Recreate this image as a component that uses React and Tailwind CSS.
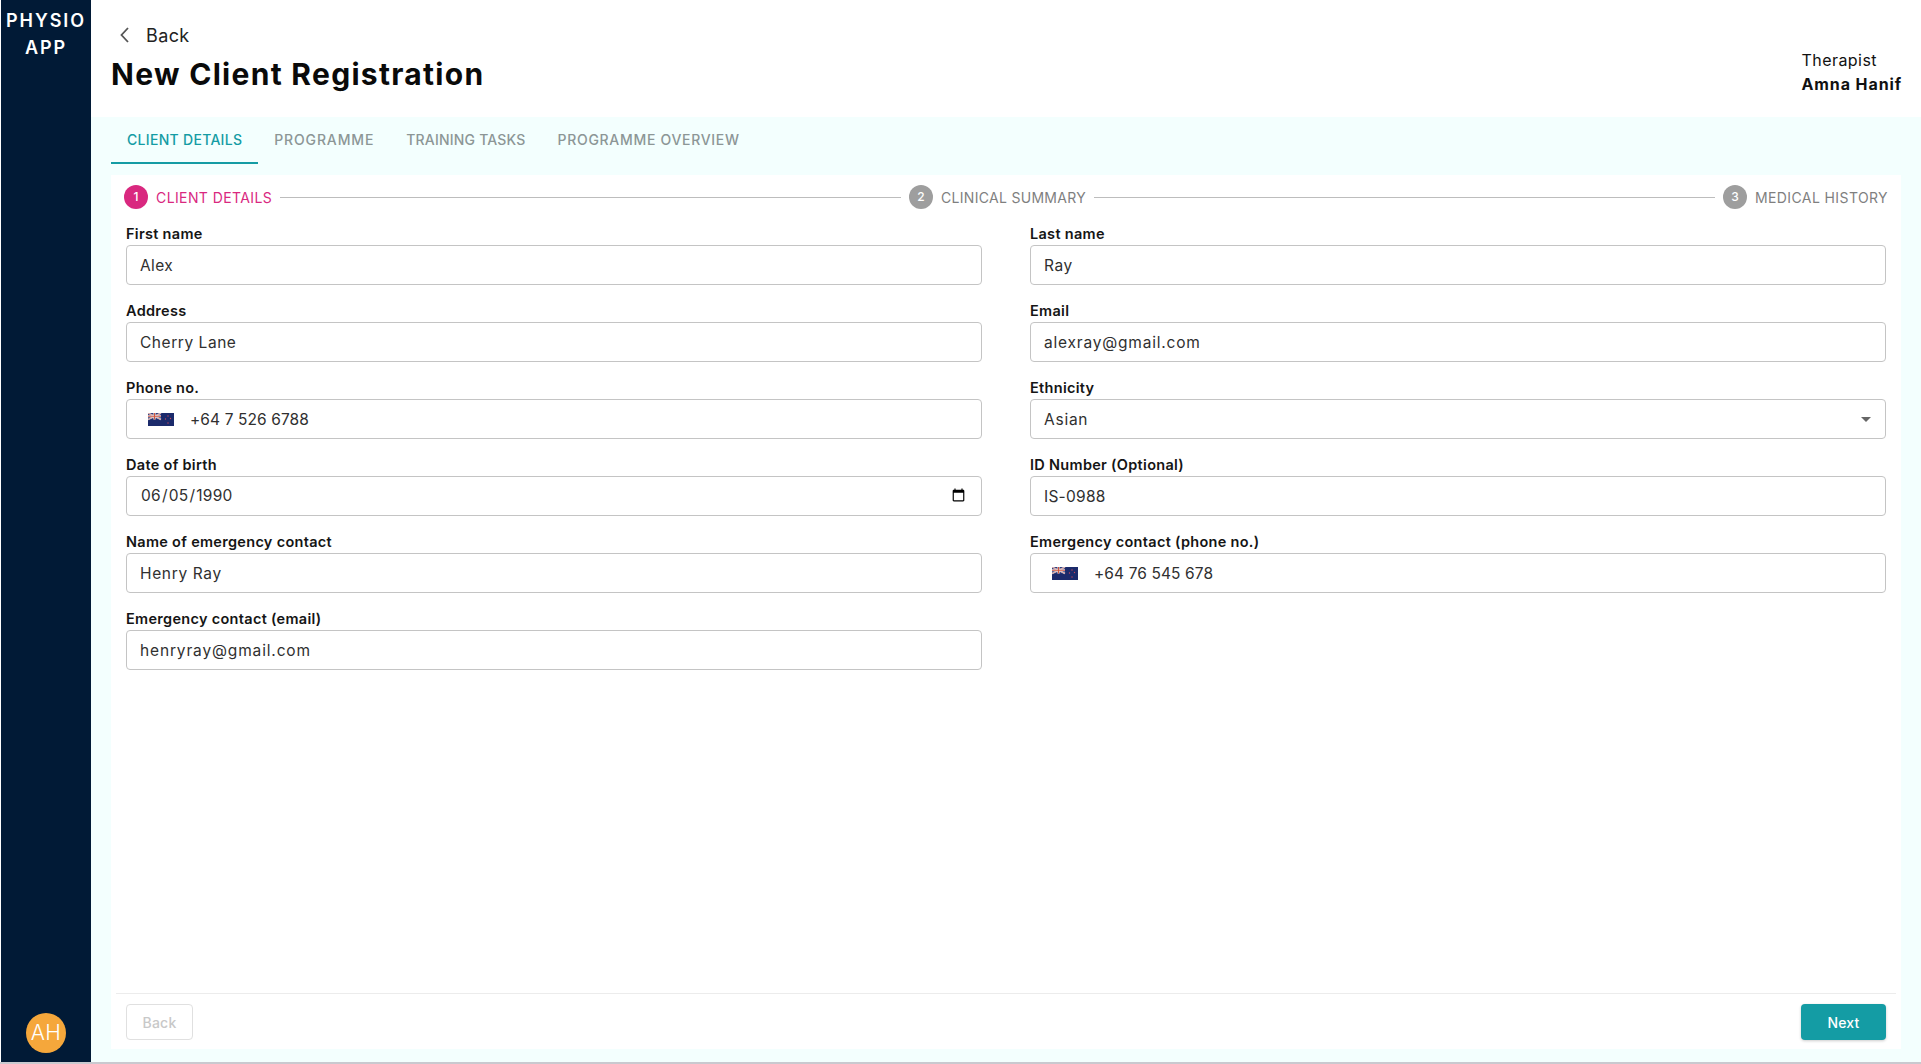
import React from "react";

const font = { fontFamily: "Inter, 'Noto Sans', sans-serif" };

function Flag() {
  return (
    <svg width="26" height="13" viewBox="0 0 26 13" className="shrink-0">
      <rect width="26" height="13" fill="#1b2a6b" />
      <rect width="13" height="6.5" fill="#2a3a7c" />
      <path d="M0 0L13 6.5M13 0L0 6.5" stroke="#e8e8ee" strokeWidth="1.4" />
      <path d="M0 0L13 6.5M13 0L0 6.5" stroke="#c9503f" strokeWidth="0.5" />
      <path d="M6.5 0V6.5M0 3.25H13" stroke="#eeeef2" strokeWidth="2.2" />
      <path d="M6.5 0V6.5M0 3.25H13" stroke="#d0553e" strokeWidth="1.2" />
      <circle cx="20" cy="3" r="0.7" fill="#c9485a" />
      <circle cx="17.5" cy="6" r="0.7" fill="#c9485a" />
      <circle cx="22.5" cy="5.5" r="0.7" fill="#c9485a" />
      <circle cx="20" cy="10" r="0.7" fill="#c9485a" />
    </svg>
  );
}

function Field({ label, children }) {
  return (
    <div className="flex flex-col">
      <label className="h-[20px] mb-[1px] flex items-center text-[14.5px] leading-[20px] font-semibold text-[#151515] tracking-[0.3px]">
        {label}
      </label>
      {children}
    </div>
  );
}

const boxBase =
  "h-[40px] w-full rounded-[4px] border border-[#c4c4c4] bg-white text-[15.5px] text-[#303030] outline-none";
const boxClass = boxBase + " flex items-center";

function TextField({ label, value, track = "tracking-[0.25px]" }) {
  return (
    <Field label={label}>
      <input readOnly value={value} className={boxClass + " px-[13px] " + track} style={font} />
    </Field>
  );
}

function PhoneField({ label, value }) {
  return (
    <Field label={label}>
      <div className={boxClass + " pl-[21px] tracking-[0.1px]"}>
        <Flag />
        <span className="ml-[16px] pt-[2px]">{value}</span>
      </div>
    </Field>
  );
}

function Step({ n, label, active, track }) {
  return (
    <div className="flex items-center shrink-0">
      <div
        className={
          "w-[24px] h-[24px] rounded-full flex items-center justify-center text-[12px] font-medium text-white " +
          (active ? "bg-[#d9287f]" : "bg-[#9e9e9e]")
        }
      >
        {n}
      </div>
      <span className={"ml-[8px] text-[14px] " + track + " " + (active ? "text-[#d9287f]" : "text-[#7f7f7f]")}>
        {label}
      </span>
    </div>
  );
}

const StepLine = () => <div className="flex-1 h-px bg-[#bdbdbd] mx-[8px]" />;

function Tab({ label, active, track }) {
  return (
    <div
      className={
        "h-[47px] px-[16px] flex items-center text-[14px] font-medium border-b-2 " +
        track +
        " " +
        (active ? "text-[#149ca4] border-[#149ca4]" : "text-[#8c9696] border-transparent")
      }
    >
      {label}
    </div>
  );
}

export default function App() {
  return (
    <div className="w-full h-[1064px] bg-white border-b-2 border-[#c9c9cf] flex overflow-hidden" style={font}>
      <aside className="ml-px w-[90px] shrink-0 bg-[#011a36] flex flex-col items-center justify-between pt-[7px] pb-[9px]">
        <div className="text-center text-white text-[18px] leading-[27px] font-semibold tracking-[1.9px]">
          PHYSIO
          <br />
          APP
        </div>
        <div className="w-[40px] h-[40px] rounded-full bg-[#f5a73b] flex items-center justify-center text-white text-[21px] font-light tracking-[0.5px]">
          AH
        </div>
      </aside>
      <main className="flex-1 min-w-0 flex flex-col">
        <header className="h-[117px] shrink-0 flex justify-between pl-[21px] pr-[19px]">
          <div>
            <div className="mt-[23px] h-[24px] flex items-center text-[18px] text-[#222] tracking-[0.4px]">
              <svg width="12" height="18" viewBox="0 0 12 18" className="ml-[7px]" fill="none" stroke="#555" strokeWidth="1.8">
                <path d="M9 2L2.5 9L9 16" />
              </svg>
              <span className="ml-[15px]">Back</span>
            </div>
            <h1 className="mt-[9px] -ml-px text-[30px] leading-[36px] font-bold text-[#0a0a0a] tracking-[1.3px]">
              New Client Registration
            </h1>
          </div>
          <div className="pt-[48px] text-[16px] leading-[24px] text-[#111]">
            <div className="tracking-[0.45px]">Therapist</div>
            <div className="font-bold tracking-[0.9px]">Amna Hanif</div>
          </div>
        </header>
        <section className="flex-1 min-h-0 bg-[#f3fffe] px-[20px] pb-[13px] flex flex-col">
          <nav className="flex mb-[11px]">
            <Tab label="CLIENT DETAILS" active track="tracking-[0.3px]" />
            <Tab label="PROGRAMME" track="tracking-[0.85px]" />
            <Tab label="TRAINING TASKS" track="tracking-[0.2px]" />
            <Tab label="PROGRAMME OVERVIEW" track="tracking-[0.7px]" />
          </nav>
          <div className="flex-1 min-h-0 bg-white flex flex-col">
            <div className="flex items-center pt-[10px] px-[13px]">
              <Step n="1" label="CLIENT DETAILS" active track="tracking-[0.4px]" />
              <StepLine />
              <Step n="2" label="CLINICAL SUMMARY" track="tracking-[0.3px]" />
              <StepLine />
              <Step n="3" label="MEDICAL HISTORY" track="tracking-[0.4px]" />
            </div>
            <form className="flex-1 grid grid-cols-2 gap-x-[48px] gap-y-[16px] content-start px-[15px] pt-[15px]">
              <TextField label="First name" value="Alex" track="tracking-[0.4px]" />
              <TextField label="Last name" value="Ray" track="tracking-[0.6px]" />
              <TextField label="Address" value="Cherry Lane" track="tracking-[0.55px]" />
              <TextField label="Email" value="alexray@gmail.com" track="tracking-[0.8px]" />
              <PhoneField label="Phone no." value="+64 7 526 6788" />
              <Field label="Ethnicity">
                <div className={boxClass + " pl-[13px] pr-[14px] justify-between tracking-[0.75px]"}>
                  <span className="pt-[2px]">Asian</span>
                  <svg width="10" height="5" viewBox="0 0 10 5">
                    <path d="M0 0H10L5 5Z" fill="#666" />
                  </svg>
                </div>
              </Field>
              <Field label="Date of birth">
                <input type="date" value="1990-06-05" onChange={() => {}} className={boxBase + " block px-[13px] tracking-[0.25px]"} style={font} />
              </Field>
              <TextField label="ID Number (Optional)" value="IS-0988" />
              <TextField label="Name of emergency contact" value="Henry Ray" track="tracking-[0.65px]" />
              <PhoneField label="Emergency contact (phone no.)" value="+64 76 545 678" />
              <TextField label="Emergency contact (email)" value="henryray@gmail.com" track="tracking-[0.85px]" />
            </form>
            <div className="mx-[5px] border-t border-[#ececec] h-[56px] shrink-0 flex items-start justify-between pt-[10px] px-[10px]">
              <button type="button" className="w-[67px] h-[36px] rounded-[4px] border border-[#e0e0e0] text-[14px] font-medium text-[#c8c8c8] bg-white tracking-[0.2px]">
                Back
              </button>
              <button type="button" className="w-[85px] h-[36px] rounded-[4px] bg-[#149ca4] text-white text-[14px] font-medium shadow-[0_1px_3px_rgba(0,0,0,0.2)] tracking-[0.2px]">
                Next
              </button>
            </div>
          </div>
        </section>
      </main>
    </div>
  );
}
